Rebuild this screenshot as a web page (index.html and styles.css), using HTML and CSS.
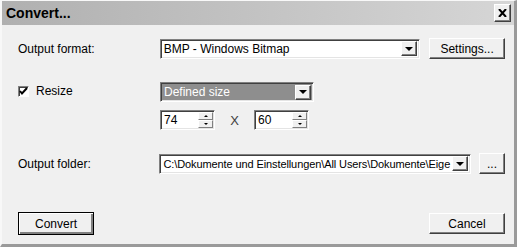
FILE: index.html
```html
<!DOCTYPE html>
<html lang="en">
<head>
    <meta charset="UTF-8">
    <title>Convert...</title>
    <link rel="stylesheet" href="styles.css">
</head>
<body>
    <div class="window">
        <div class="titlebar">
            <span class="title">Convert...</span>
            <button class="close-btn">
                <svg width="9" height="8" viewBox="0 0 9 8"><path d="M1 0 L8 8 M8 0 L1 8" stroke="#000" stroke-width="2"/></svg>
            </button>
        </div>

        <div class="content">
            <div class="row row-format">
                <label class="label">Output format:</label>
                <div class="combo combo-format">
                    <span class="combo-text">BMP - Windows Bitmap</span>
                    <span class="arrow-btn"><i class="tri"></i></span>
                </div>
                <button class="btn btn-settings">Settings...</button>
            </div>

            <div class="row row-resize">
                <label class="label check-label"><span class="checkbox">
                    <svg width="9" height="9" viewBox="0 0 9 9"><path d="M1 4 L3 6.5 L8 1" stroke="#000" stroke-width="2" fill="none"/></svg>
                </span>Resize</label>
                <div class="combo combo-size">
                    <span class="combo-text">Defined size</span>
                    <span class="arrow-btn"><i class="tri"></i></span>
                </div>
            </div>

            <div class="row row-spin">
                <div class="spin">
                    <span class="spin-text">74</span>
                    <span class="spin-btns">
                        <span class="spin-btn"><i class="tri-up"></i></span>
                        <span class="spin-btn"><i class="tri-sm"></i></span>
                    </span>
                </div>
                <span class="times">X</span>
                <div class="spin">
                    <span class="spin-text">60</span>
                    <span class="spin-btns">
                        <span class="spin-btn"><i class="tri-up"></i></span>
                        <span class="spin-btn"><i class="tri-sm"></i></span>
                    </span>
                </div>
            </div>

            <div class="row row-folder">
                <label class="label">Output folder:</label>
                <div class="combo combo-folder">
                    <span class="combo-text path-text">C:\Dokumente und Einstellungen\All Users\Dokumente\Eige</span>
                    <span class="arrow-btn"><i class="tri"></i></span>
                </div>
                <button class="btn btn-browse">...</button>
            </div>

            <div class="row row-buttons">
                <button class="btn btn-default">Convert</button>
                <button class="btn">Cancel</button>
            </div>
        </div>
    </div>
</body>
</html>
```

FILE: styles.css
```css
body {
    margin: 0;
    font-family: "Liberation Sans", Arial, sans-serif;
    font-size: 12px;
    color: #000;
    background-color: #fff;
}

.window {
    width: 517px;
    height: 247px;
    box-sizing: border-box;
    background-color: #f0f0f0;
    border-left: 2px solid #f8f8f8;
    border-top: 1px solid #f8f8f8;
    border-right: 3px solid #9a9a9a;
    border-bottom: 3px solid #9a9a9a;
    display: flex;
    flex-direction: column;
}

.titlebar {
    height: 24px;
    background: linear-gradient(to right, #b0b0b0, #d6d6d6);
    display: flex;
    align-items: center;
    justify-content: space-between;
    padding: 0 3px 0 4px;
}

.title {
    font-weight: bold;
    font-size: 14px;
}

.close-btn {
    width: 17px;
    height: 18px;
    padding: 0;
    background-color: #f0f0f0;
    border: 1px solid;
    border-color: #fff #404040 #404040 #fff;
    box-shadow: inset -1px -1px #808080;
    display: flex;
    align-items: center;
    justify-content: center;
}

.content {
    flex: 1;
    padding: 0 9px 0 14px;
    display: flex;
    flex-direction: column;
}

.row {
    display: flex;
    align-items: center;
}

.label {
    width: 142px;
    padding-left: 2px;
}

.row-format {
    margin-top: 13px;
}

.row-resize {
    margin-top: 23px;
}

.row-spin {
    margin-top: 8px;
    padding-left: 144px;
}

.row-folder {
    margin-top: 23px;
}

.row-buttons {
    margin-top: 38px;
    justify-content: space-between;
    padding-left: 2px;
}

/* sunken field */
.combo, .spin {
    height: 20px;
    box-sizing: border-box;
    background-color: #fff;
    border: 1px solid;
    border-color: #808080 #fff #fff #808080;
    box-shadow: inset 1px 1px #404040, inset -1px -1px #e4e4e4;
    display: flex;
    align-items: center;
    padding: 2px 2px 2px 3px;
}

.combo-text, .spin-text {
    flex: 1;
    white-space: nowrap;
    overflow: hidden;
}

.path-text {
    font-size: 11px;
    letter-spacing: -0.1px;
}

.combo-format {
    width: 261px;
}

.combo-size {
    width: 154px;
    background-color: #8e8e8e;
    color: #fff;
}

.combo-folder {
    width: 313px;
}

.arrow-btn {
    width: 16px;
    height: 15px;
    box-sizing: border-box;
    background-color: #f0f0f0;
    border: 1px solid;
    border-color: #fff #404040 #404040 #fff;
    box-shadow: inset -1px -1px #808080;
    display: flex;
    align-items: center;
    justify-content: center;
}

.tri {
    width: 0;
    height: 0;
    border-left: 4px solid transparent;
    border-right: 4px solid transparent;
    border-top: 4px solid #000;
}

.checkbox {
    width: 11px;
    height: 11px;
    box-sizing: border-box;
    display: inline-flex;
    align-items: center;
    justify-content: center;
    background-color: #fff;
    border: 1px solid;
    border-color: #808080 #fff #fff #808080;
    box-shadow: inset 1px 1px #404040;
    margin-right: 7px;
    vertical-align: -1px;
}

.check-label {
    align-self: flex-start;
    margin-top: 2px;
}

.spin {
    width: 55px;
    padding-right: 1px;
}

.spin-btns {
    display: flex;
    flex-direction: column;
    height: 16px;
}

.spin-btn {
    width: 15px;
    height: 8px;
    box-sizing: border-box;
    background-color: #f0f0f0;
    border: 1px solid;
    border-color: #fff #808080 #808080 #fff;
    display: flex;
    align-items: center;
    justify-content: center;
}

.tri-up {
    border-left: 2px solid transparent;
    border-right: 2px solid transparent;
    border-bottom: 2px solid #000;
}

.tri-sm {
    border-left: 2px solid transparent;
    border-right: 2px solid transparent;
    border-top: 2px solid #000;
}

.times {
    width: 39px;
    text-align: center;
    color: #404040;
    font-size: 13px;
}

.btn {
    font-family: "Liberation Sans", Arial, sans-serif;
    font-size: 12px;
    width: 76px;
    height: 21px;
    padding: 0;
    background-color: #f0f0f0;
    border: 1px solid;
    border-color: #fff #404040 #404040 #fff;
    box-shadow: inset -1px -1px #808080;
}

.btn-settings {
    margin-left: 9px;
}

.btn-browse {
    width: 26px;
    margin-left: 8px;
}

.btn-default {
    border: 1px solid #000;
    box-shadow: inset 1px 1px #fff, inset -2px -2px #808080;
    height: 23px;
}
```
